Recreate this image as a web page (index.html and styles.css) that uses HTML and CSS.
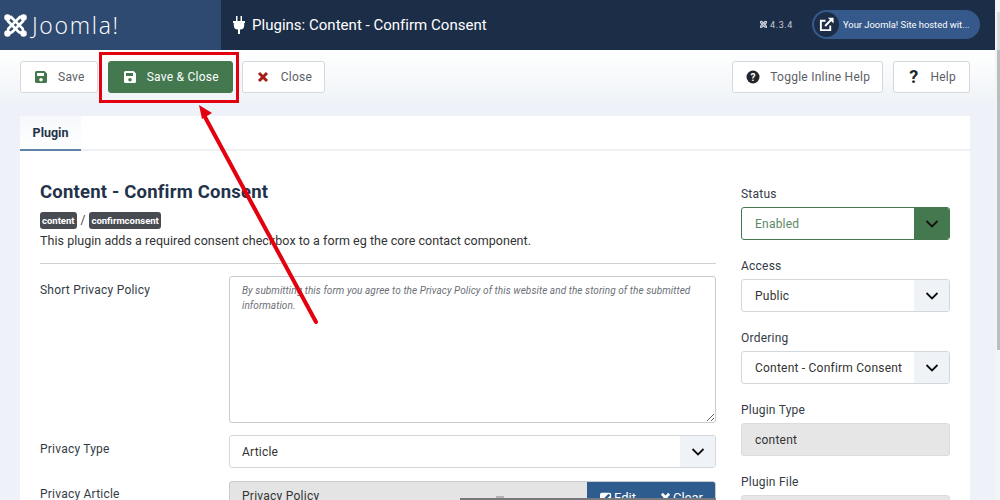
FILE: index.html
```html
<!DOCTYPE html>
<html lang="en">
<head>
<meta charset="utf-8">
<title>Plugins: Content - Confirm Consent</title>
<link rel="stylesheet" href="styles.css">
</head>
<body>
<div class="page">
  <header class="header">
    <div class="brand">
      <svg class="brand-mark" viewBox="0 0 28 28" width="25" height="25"><g fill="none" stroke="#fff" stroke-width="3" stroke-linecap="round"><path d="M5 5L9 4.500L22 17.500L23 23"/><path d="M5 5L5.500 9L18 21.500L23 23"/><path d="M23 5L19 4.500L6 17.500L5 23"/><path d="M23 5L22.500 9L10 21.500L5 23"/></g><circle cx="5" cy="5" r="3.600" fill="#fff"/><circle cx="23" cy="5" r="3.600" fill="#fff"/><circle cx="5" cy="23" r="3.600" fill="#fff"/><circle cx="23" cy="23" r="3.600" fill="#fff"/></svg>
      <span class="brand-name">Joomla!</span>
    </div>
    <div class="title-bar">
      <svg class="plug" viewBox="0 0 12 18" width="12" height="18"><path fill="#fff" d="M3 0h1.500v5H3zM7.500 0H9v5H7.500zM0 5h12v2h-.8v2.500a4 4 0 0 1-4 4H7V18H5v-4.500h-.2a4 4 0 0 1-4-4V7H0z"/></svg>
      <h1 class="page-title">Plugins: Content - Confirm Consent</h1>
      <div class="header-right">
        <span class="version"><svg viewBox="0 0 28 28" width="9" height="9"><g fill="none" stroke="#c6ccd6" stroke-width="4" stroke-linecap="round"><path d="M5 5L9 4.500L22 17.500L23 23"/><path d="M5 5L5.500 9L18 21.500L23 23"/><path d="M23 5L19 4.500L6 17.500L5 23"/><path d="M23 5L22.500 9L10 21.500L5 23"/></g></svg> 4.3.4</span>
        <div class="host-pill">
          <span class="host-icon"><svg viewBox="0 0 16 16" width="15" height="15"><path fill="none" stroke="#fff" stroke-width="2" d="M12 9v5H2V4h5"/><path fill="none" stroke="#fff" stroke-width="2.200" d="M6.500 9.500L14 2"/><path fill="#fff" d="M9.500 0.800h6v6z"/></svg></span>
          <span class="host-text">Your Joomla! Site hosted wit...</span>
        </div>
      </div>
    </div>
  </header>

  <div class="toolbar">
    <div class="toolbar-group">
      <button class="btn"><svg class="ico" viewBox="0 0 14 14" width="14" height="14"><path class="save-green" d="M1.500 1h9L13 3.500v8A1.500 1.500 0 0 1 11.500 13h-9A1.500 1.500 0 0 1 1 11.500v-9A1.500 1.500 0 0 1 2.500 1zM3 3v3h7V3zM7 8a1.800 1.800 0 1 0 0 3.600A1.800 1.800 0 0 0 7 8z" fill-rule="evenodd"/></svg>Save</button>
      <button class="btn btn-primary"><svg class="ico" viewBox="0 0 14 14" width="14" height="14"><path fill="#fff" d="M1.500 1h9L13 3.500v8A1.500 1.500 0 0 1 11.500 13h-9A1.500 1.500 0 0 1 1 11.500v-9A1.500 1.500 0 0 1 2.500 1zM3 3v3h7V3zM7 8a1.800 1.800 0 1 0 0 3.600A1.800 1.800 0 0 0 7 8z" fill-rule="evenodd"/></svg>Save &amp; Close</button>
      <button class="btn btn-close"><svg class="ico" viewBox="0 0 12 12" width="12" height="12"><path fill="none" stroke="#a51f18" stroke-width="3" d="M2 2l8 8M10 2l-8 8"/></svg>Close</button>
    </div>
    <div class="toolbar-group">
      <button class="btn"><svg class="ico" viewBox="0 0 14 14" width="14" height="14"><circle cx="7" cy="7" r="6.500" fill="#22262a"/><text x="7" y="10.600" class="qmark">?</text></svg>Toggle Inline Help</button>
      <button class="btn btn-help"><span class="help-q">?</span>Help</button>
    </div>
  </div>

  <main class="content">
    <section class="card">
      <nav class="tabs"><span class="tab">Plugin</span></nav>
      <div class="card-body">
        <div class="col-main">
          <h2 class="plugin-title">Content - Confirm Consent</h2>
          <div class="badges"><span class="badge">content</span><span class="slash">/</span><span class="badge">confirmconsent</span></div>
          <p class="desc">This plugin adds a required consent checkbox to a form eg the core contact component.</p>
          <hr class="rule">
          <div class="field field-area">
            <label class="field-label">Short Privacy Policy</label>
            <textarea class="textarea" placeholder="By submitting this form you agree to the Privacy Policy of this website and the storing of the submitted information."></textarea>
          </div>
          <div class="field">
            <label class="field-label">Privacy Type</label>
            <div class="select"><span>Article</span><span class="caret"><svg viewBox="0 0 14 8" width="14" height="8"><path d="M1.500 1L7 6.500 12.500 1" fill="none" stroke="#111" stroke-width="1.800"/></svg></span></div>
          </div>
          <div class="field">
            <label class="field-label field-label-tight">Privacy Article</label>
            <div class="article-input">
              <span class="article-name">Privacy Policy</span>
              <span class="article-btn article-edit"><svg viewBox="0 0 14 14" width="12" height="12"><rect x="0" y="1" width="13" height="13" rx="2" fill="#fff"/><path d="M3.500 10.500l1-3L10 2l2 2-5.500 5.500z" fill="#2f5c8f"/></svg>Edit</span>
              <span class="article-btn article-clear"><svg viewBox="0 0 12 12" width="11" height="11"><path fill="none" stroke="#fff" stroke-width="3" d="M2 2l8 8M10 2l-8 8"/></svg>Clear</span>
            </div>
          </div>
        </div>
        <aside class="col-side">
          <div class="side-field">
            <label class="side-label">Status</label>
            <div class="select select-ok"><span>Enabled</span><span class="caret"><svg viewBox="0 0 14 8" width="14" height="8"><path d="M1.500 1L7 6.500 12.500 1" fill="none" stroke="#111" stroke-width="1.800"/></svg></span></div>
          </div>
          <div class="side-field">
            <label class="side-label">Access</label>
            <div class="select"><span>Public</span><span class="caret"><svg viewBox="0 0 14 8" width="14" height="8"><path d="M1.500 1L7 6.500 12.500 1" fill="none" stroke="#111" stroke-width="1.800"/></svg></span></div>
          </div>
          <div class="side-field">
            <label class="side-label">Ordering</label>
            <div class="select"><span>Content - Confirm Consent</span><span class="caret"><svg viewBox="0 0 14 8" width="14" height="8"><path d="M1.500 1L7 6.500 12.500 1" fill="none" stroke="#111" stroke-width="1.800"/></svg></span></div>
          </div>
          <div class="side-field">
            <label class="side-label">Plugin Type</label>
            <div class="readonly">content</div>
          </div>
          <div class="side-field">
            <label class="side-label">Plugin File</label>
            <div class="readonly"></div>
          </div>
        </aside>
      </div>
    </section>
  </main>

  <div class="highlight"></div>
  <svg class="arrow" viewBox="0 0 1000 500" width="1000" height="500"><path d="M316 322L205 117" stroke="#e3000f" stroke-width="4" stroke-linecap="round" fill="none"/><path d="M199 105l13 8-10 6z" fill="#e3000f"/></svg>
  <div class="video-line"><span class="video-bump"></span></div>
</div>
<div class="scrollbar"><div class="scrollbar-thumb"></div></div>
</body>
</html>
```

FILE: styles.css
```css
* { box-sizing: border-box; }
html, body { margin: 0; height: 500px; overflow: hidden; }
body { display: flex; font-family: Roboto, "Liberation Sans", sans-serif; color: #22262a; background: #eef2f8; font-size: 14px; }
.page { position: relative; width: 995px; height: 500px; overflow: hidden; flex: none; }
.scrollbar { width: 5px; background: #f3f4f7; height: 500px; padding: 12px 0 0 2px; }
.scrollbar-thumb { width: 3px; height: 338px; background: linear-gradient(#dcdcdc 38px, #bdbdbd 38px); }

.header { display: flex; height: 50px; background: #1c2d48; }
.brand { width: 221px; background: #2e4a70; display: flex; align-items: center; padding-left: 3px; gap: 4px; }
.brand-name { color: #fff; font-family: "Open Sans", sans-serif; font-weight: 300; font-size: 23px; letter-spacing: 1.700px; }
.title-bar { flex: 1; display: flex; align-items: center; padding: 0 0 1px 12px; color: #fff; }
.plug { margin-right: 7px; }
.page-title { font-size: 15px; font-weight: 400; margin: 0; letter-spacing: .02px; }
.header-right { margin-left: auto; display: flex; align-items: center; }
.version { font-size: 9px; color: #c6ccd6; letter-spacing: .6px; margin-right: 19px; display: flex; align-items: center; gap: 2px; }
.host-pill { width: 168px; height: 29px; border-radius: 15px; background: #35598a; display: flex; align-items: center; margin-right: 15px; padding-left: 2px; }
.host-icon { width: 25px; height: 25px; border-radius: 50%; background: #1c2d48; display: flex; align-items: center; justify-content: center; }
.host-text { color: #fff; font-size: 9.400px; margin-left: 4px; white-space: nowrap; }

.toolbar { height: 53px; display: flex; justify-content: space-between; align-items: center; padding: 0 25px 0 20px; background: linear-gradient(#fff, #eff3f7); }
.toolbar-group { display: flex; gap: 10px; }
.btn { height: 32px; display: flex; align-items: center; background: #fff; border: 1px solid #d5d8dc; border-radius: 3px; color: #5b6067; font: 400 12px Roboto, sans-serif; letter-spacing: .25px; padding: 0 12px 0 13px; white-space: nowrap; }
.ico { margin-right: 10px; flex: none; }
.save-green { fill: #44774e; }
.btn-primary { background: #44794f; border-color: #44794f; color: #fff; width: 125px; padding-left: 14px; }
.btn-close { margin-left: -1px; padding-left: 14px; }
.btn-close .ico { margin-right: 12px; }
.btn-help { padding: 0 13px 0 15px; }
.help-q { font-weight: 700; font-size: 18px; color: #22262a; margin-right: 12px; }
.qmark { font: 700 10px Roboto, sans-serif; fill: #fff; text-anchor: middle; }

.content { padding: 13px 25px 0 20px; }
.card { background: #fff; height: 500px; }
.tabs { height: 35px; border-bottom: 2px solid #eef0f3; display: flex; }
.tab { width: 61px; height: 35px; display: flex; align-items: center; justify-content: center; font-weight: 700; font-size: 12.500px; color: #24324a; background: linear-gradient(#f6f8fb, #fff); border-bottom: 2px solid #5d83a7; }
.card-body { display: flex; padding: 0 20px; }
.col-main { width: 676px; padding-top: 30px; }
.col-side { width: 209px; margin-left: 25px; padding-top: 36px; }

.plugin-title { font-size: 18.500px; font-weight: 700; color: #22324a; margin: 0; line-height: 22px; letter-spacing: .2px; }
.badges { display: flex; align-items: center; margin-top: 8px; height: 18px; }
.badge { background: #484c52; color: #fff; border-radius: 3px; font-size: 9.500px; font-weight: 700; padding: 0 2px; height: 17px; line-height: 17px; }
.slash { font-size: 12px; margin: 0 4px 0 4px; color: #444; }
.desc { margin: 3px 0 0; font-size: 12.500px; line-height: 18px; letter-spacing: .04px; color: #333; }
.rule { border: 0; border-top: 1px solid #cfd1d4; margin: 13px 0 12px; }

.field { display: flex; margin-bottom: 13px; }
.field-label, .side-label { font-size: 12px; letter-spacing: .22px; color: #333b45; }
.field-label { width: 189px; flex: none; padding-top: 7px; }
.field-label-tight { padding-top: 6px; }
.field .select { padding-left: 12px; }
.textarea { width: 487px; height: 147px; border: 1px solid #c8ccd0; border-radius: 3px; padding: 7px 12px; font: italic 10px/14.500px Roboto, sans-serif; letter-spacing: .07px; display: block; margin: 0; outline: none; background: #fff; }
.textarea::placeholder { color: #6b7077; opacity: 1; }
.field-area { margin-bottom: 12px; }

.select { height: 33px; width: 100%; border: 1px solid #d3d7dc; border-radius: 3px; display: flex; align-items: center; justify-content: space-between; padding-left: 13px; font-size: 12px; letter-spacing: .22px; color: #333; overflow: hidden; }
.caret { width: 35px; height: 100%; background: #eff3f8; display: flex; align-items: center; justify-content: center; flex: none; }
.select-ok { border-color: #44794f; color: #5c8866; }
.select-ok .caret { background: #44794f; }

.article-input { width: 487px; height: 33px; background: #e4e4e4; border: 1px solid #c8ccd0; border-radius: 3px; display: flex; align-items: center; font-size: 12px; padding-left: 12px; color: #333; overflow: hidden; }
.article-name { flex: 1; letter-spacing: .25px; margin-bottom: 3px; }
.article-btn { background: #2f5c8f; color: #fff; height: 33px; display: flex; align-items: center; gap: 2px; flex: none; font-size: 13px; }
.article-edit { padding: 0 11px 0 13px; }
.article-clear { padding: 0 12px 0 13px; }

.side-field { margin-bottom: 19px; }
.side-label { display: block; line-height: 14px; margin-bottom: 6px; }
.readonly { height: 33px; background: #e6e6e6; border: 1px solid #dcdcdc; border-radius: 3px; padding-left: 13px; display: flex; align-items: center; font-size: 12px; letter-spacing: .22px; color: #333; }

.highlight { position: absolute; left: 99px; top: 52px; width: 140px; height: 51px; border: 3px solid #e3000f; }
.arrow { position: absolute; left: 0; top: 0; pointer-events: none; }
.video-line { position: absolute; left: 460px; bottom: 0; width: 256px; height: 2px; background: #77797c; }
.video-bump { position: absolute; left: 36px; top: -2px; width: 8px; height: 2px; background: #b3b3b3; }
```
